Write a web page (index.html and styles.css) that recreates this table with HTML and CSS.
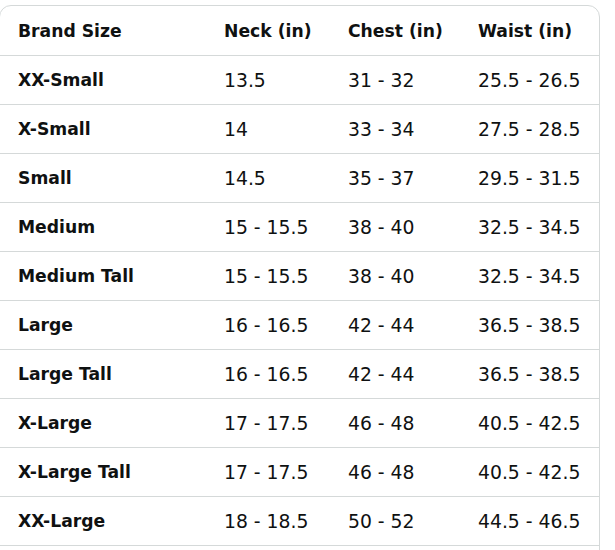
FILE: index.html
```html
<!DOCTYPE html>
<html>
<head>
<meta charset="utf-8">
<link rel="stylesheet" href="styles.css">
</head>
<body>
<div class="card">
  <table class="size-table">
    <colgroup>
      <col class="c1"><col class="c2"><col class="c3"><col class="c4">
    </colgroup>
    <thead>
      <tr><th>Brand Size</th><th>Neck (in)</th><th>Chest (in)</th><th>Waist (in)</th></tr>
    </thead>
    <tbody>
      <tr><th>XX-Small</th><td>13.5</td><td>31 - 32</td><td>25.5 - 26.5</td></tr>
      <tr><th>X-Small</th><td>14</td><td>33 - 34</td><td>27.5 - 28.5</td></tr>
      <tr><th>Small</th><td>14.5</td><td>35 - 37</td><td>29.5 - 31.5</td></tr>
      <tr><th>Medium</th><td>15 - 15.5</td><td>38 - 40</td><td>32.5 - 34.5</td></tr>
      <tr><th>Medium Tall</th><td>15 - 15.5</td><td>38 - 40</td><td>32.5 - 34.5</td></tr>
      <tr><th>Large</th><td>16 - 16.5</td><td>42 - 44</td><td>36.5 - 38.5</td></tr>
      <tr><th>Large Tall</th><td>16 - 16.5</td><td>42 - 44</td><td>36.5 - 38.5</td></tr>
      <tr><th>X-Large</th><td>17 - 17.5</td><td>46 - 48</td><td>40.5 - 42.5</td></tr>
      <tr><th>X-Large Tall</th><td>17 - 17.5</td><td>46 - 48</td><td>40.5 - 42.5</td></tr>
      <tr><th>XX-Large</th><td>18 - 18.5</td><td>50 - 52</td><td>44.5 - 46.5</td></tr>
    </tbody>
  </table>
</div>
</body>
</html>
```
FILE: styles.css
```css
html, body {
  margin: 0;
  padding: 0;
  background: #ffffff;
}
body {
  font-family: "DejaVu Sans", "Noto Sans", sans-serif;
  color: #0f1111;
  overflow: hidden;
}
.card {
  margin: 5px 0 0 -1px;
  width: 599px;
  border: 1px solid #d5d9d9;
  border-radius: 12px;
  padding-bottom: 20px;
}
.size-table {
  width: 100%;
  border-collapse: collapse;
}
.c1 { width: 206px; }
.c2 { width: 124px; }
.c3 { width: 130px; }
.c4 { width: auto; }
.size-table th,
.size-table td {
  height: 49px;
  padding: 1px 0 0 18px;
  text-align: left;
  vertical-align: middle;
  border-bottom: 1px solid #d5d9d9;
  white-space: nowrap;
  box-sizing: border-box;
}
.size-table th {
  font-weight: 700;
  font-size: 17.2px;
}
.size-table td {
  font-weight: 400;
  font-size: 18.8px;
}
```
